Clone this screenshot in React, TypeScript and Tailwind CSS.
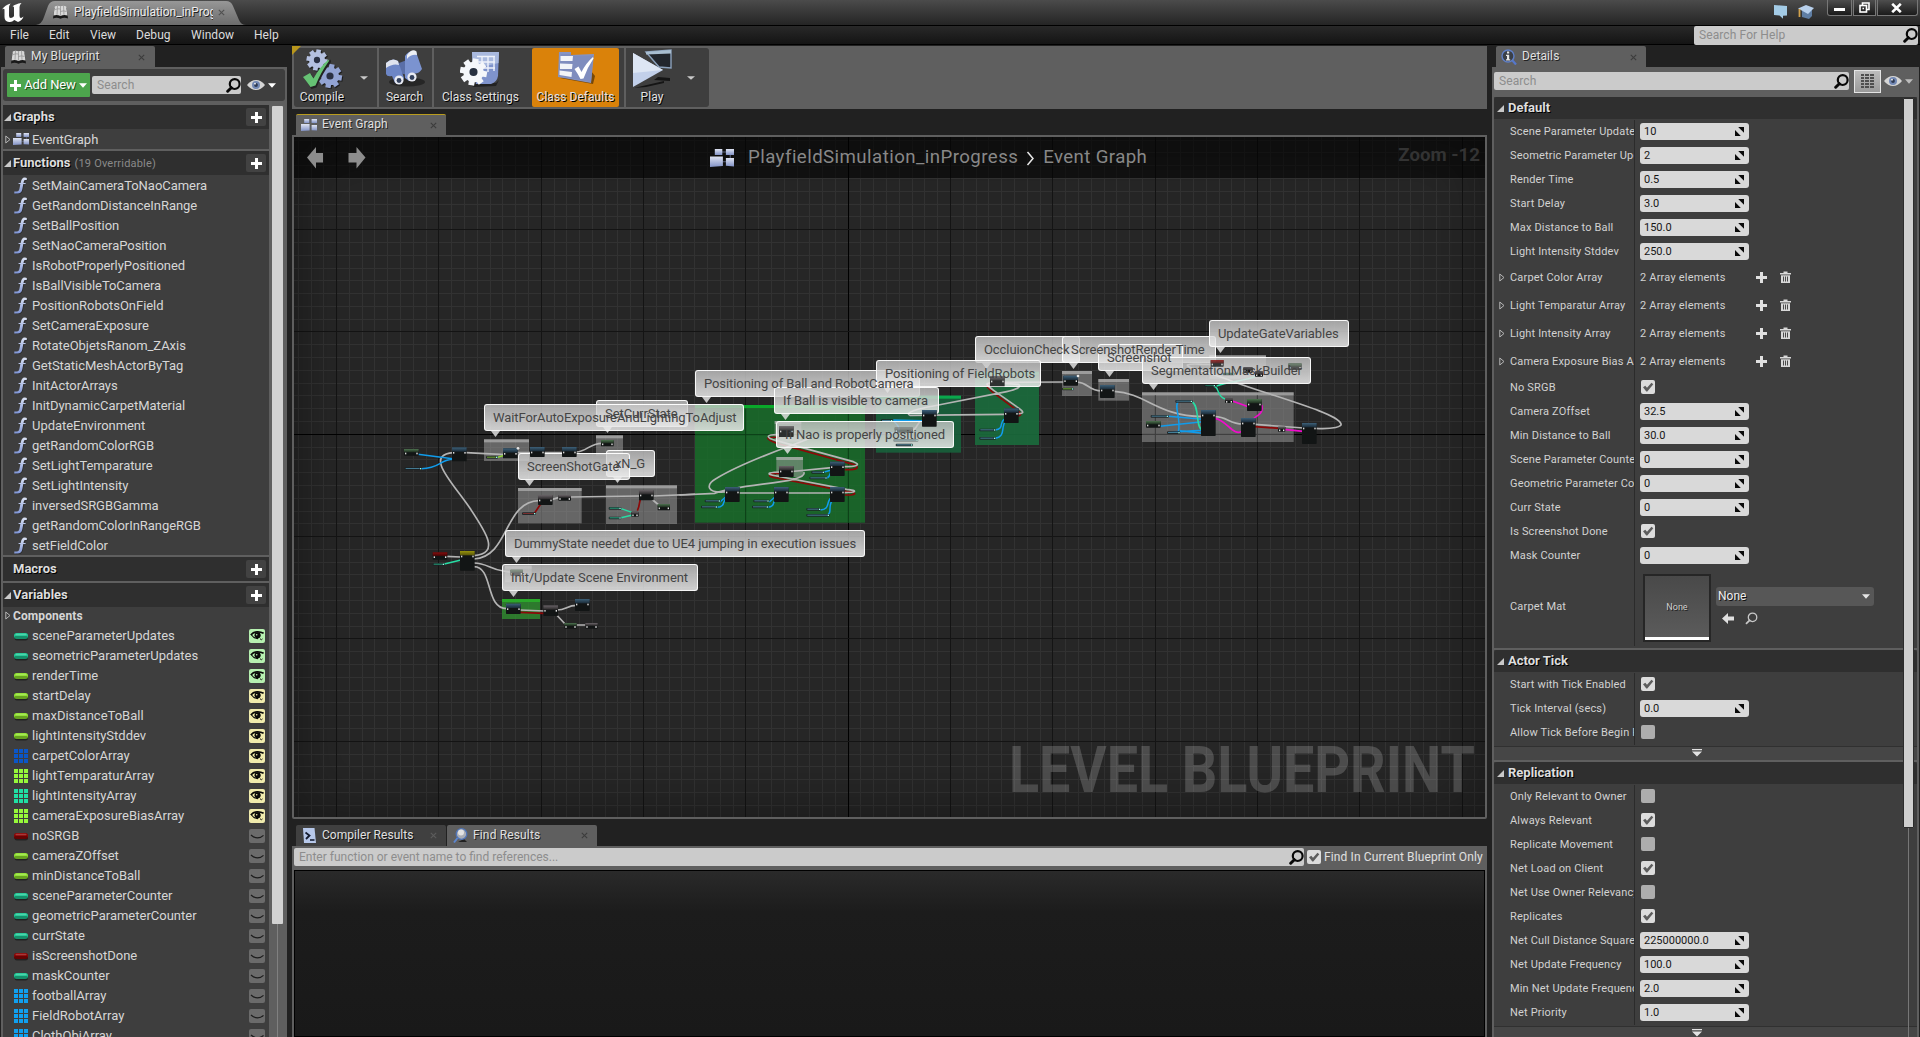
import React from "react";

/* ---------- small icons ---------- */

function GraphIcon({ w = 16, h = 12 }: { w?: number; h?: number }) {
  return (
    <svg width={w} height={h} viewBox="0 0 16 12" className="shrink-0">
      <defs>
        <linearGradient id="gi" x1="0" y1="0" x2="0" y2="1">
          <stop offset="0" stopColor="#dfe4f2" />
          <stop offset="1" stopColor="#8292c6" />
        </linearGradient>
      </defs>
      <path d="M8 2h3M8.5 8.5h3M13.5 4v2" stroke="#59627c" strokeWidth=".7" />
      <rect x="3.2" y="0" width="5" height="4" fill="url(#gi)" />
      <rect x="10.6" y="0" width="5.4" height="4" fill="url(#gi)" />
      <path d="M0 5h8.6v6.4L0 12z" fill="url(#gi)" />
      <path d="M10.6 6H16v5.6l-5.4-.4z" fill="url(#gi)" />
    </svg>
  );
}

function FnIcon() {
  return (
    <svg width="14" height="17" viewBox="0 0 14 17" className="shrink-0">
      <defs>
        <linearGradient id="fn" x1="0" y1="0" x2="0" y2="1">
          <stop offset="0" stopColor="#dde3f3" />
          <stop offset="1" stopColor="#7f95d6" />
        </linearGradient>
      </defs>
      <g fill="none" stroke="#1d1d1d" strokeWidth="1.6" opacity=".6" transform="translate(.8 .8)">
        <path d="M12.6 2C10 .6 9.2 3 8.6 6L7.5 11.5C6.9 14.8 5 16 1 15.2" />
      </g>
      <path d="M12.8 .9v2.100h-1.600C10.400 2.700 9.900 3.800 9.500 6h2.200l-.2 1.100H9.300l-1 5.200C7.700 15.200 6.200 16.500 3.600 16.500H.3v-2h2C4.300 14.700 5 13.800 5.500 11.500L6.400 7.100H4.500l.2-1.100h2C7.300 2.500 8.400.5 11 .6z" fill="url(#fn)" />
    </svg>
  );
}

function Magnifier({ s = 15, c = "#080808", sw = 2.2 }: { s?: number; c?: string; sw?: number }) {
  return (
    <svg width={s} height={s} viewBox="0 0 15 15" className="shrink-0" fill="none" stroke={c}>
      <circle cx="8.700" cy="6.100" r="4.900" strokeWidth={sw} />
      <path d="M5.300 9.700L1.700 13.200" strokeWidth={sw * 1.35} strokeLinecap="round" />
    </svg>
  );
}

function SoftEye() {
  return (
    <svg width="18" height="12" viewBox="0 0 18 12" className="shrink-0">
      <path d="M0 6Q4 1 9 1t9 5q-4 5-9 5T0 6z" fill="#d5d5d5" />
      <circle cx="9" cy="6" r="4" fill="#7288b4" />
      <circle cx="9" cy="6" r="1.900" fill="#2f3a52" />
      <circle cx="8" cy="4.700" r=".9" fill="#f4f4f4" />
    </svg>
  );
}

function Down({ w = 8, h = 5, c = "#e6e6e6" }: { w?: number; h?: number; c?: string }) {
  return (
    <svg width={w} height={h} viewBox="0 0 8 5" className="shrink-0" preserveAspectRatio="none">
      <path d="M0 .3h8L4 4.800z" fill={c} />
    </svg>
  );
}

function Plus({ s = 11, c = "#fff" }: { s?: number; c?: string }) {
  return (
    <svg width={s} height={s} viewBox="0 0 11 11" className="shrink-0">
      <path d="M4 0h3v4h4v3H7v4H4V7H0V4h4z" fill={c} />
    </svg>
  );
}

function Expanded() {
  return (
    <svg width="7" height="7" viewBox="0 0 7 7" className="shrink-0">
      <path d="M7 0v7H0z" fill="#c9c9c9" />
    </svg>
  );
}

function Collapsed() {
  return (
    <svg width="6" height="9" viewBox="0 0 6 9" className="shrink-0">
      <path d="M.8 1v7L5 4.500z" fill="none" stroke="#b5b5b5" strokeWidth="1" />
    </svg>
  );
}

function CloseX({ c = "#3c3c3c" }: { c?: string }) {
  return (
    <svg width="7" height="7" viewBox="0 0 7 7" className="shrink-0">
      <path d="M.8.8l5.400 5.400M6.200.8L.8 6.200" stroke={c} strokeWidth="1.100" />
    </svg>
  );
}

function BookIcon() {
  return (
    <svg width="15" height="14" viewBox="0 0 15 14" className="shrink-0">
      <path d="M1.500 2Q4 .5 7.500 1.800 11 .5 13.500 2L15 12.500Q11 11 7.500 12.800 4 11 0 12.500z" fill="#191919" transform="translate(0 1)" />
      <path d="M1.800 1.500Q4 0 7.500 1.200 11 0 13.200 1.500L14.500 10.500Q11 9.500 7.500 10.900 4 9.500.5 10.500z" fill="#d8d8d8" />
      <path d="M7.500 1.200v9.500M4.500.8L4 9.800M10.500.8l.5 9M2 4.500q5-1.300 5.500 0M7.500 6.500q3-1.300 6 0" stroke="#8e8e8e" strokeWidth=".7" fill="none" />
    </svg>
  );
}

function Check({ on = true }: { on?: boolean }) {
  return on ? (
    <span className="flex h-3.5 w-3.5 shrink-0 items-center justify-center rounded-[2px] bg-[#dcdcdc]">
      <svg width="12" height="10" viewBox="0 0 12 10">
        <path d="M1 5.200l2.300-1.500 1.700 2L9.500.7l1.800 1.600L5.300 9.500H4.300z" fill="#5d5d5d" />
      </svg>
    </span>
  ) : (
    <span className="h-3.5 w-3.5 shrink-0 rounded-[2px] bg-[#adadad]" />
  );
}

/* ---------- left panel ---------- */

const functions = [
  "SetMainCameraToNaoCamera", "GetRandomDistanceInRange", "SetBallPosition", "SetNaoCameraPosition",
  "IsRobotProperlyPositioned", "IsBallVisibleToCamera", "PositionRobotsOnField", "SetCameraExposure",
  "RotateObjetsRanom_ZAxis", "GetStaticMeshActorByTag", "InitActorArrays", "InitDynamicCarpetMaterial",
  "UpdateEnvironment", "getRandomColorRGB", "SetLightTemparature", "SetLightIntensity",
  "inversedSRGBGamma", "getRandomColorInRangeRGB", "setFieldColor",
];

type Eye = "green" | "yellow" | "shut";
const variables: [string, "pill" | "grid", string, Eye][] = [
  ["sceneParameterUpdates", "pill", "#1fc795", "green"],
  ["seometricParameterUpdates", "pill", "#1fc795", "green"],
  ["renderTime", "pill", "#8ee02e", "green"],
  ["startDelay", "pill", "#8ee02e", "yellow"],
  ["maxDistanceToBall", "pill", "#8ee02e", "yellow"],
  ["lightIntensityStddev", "pill", "#8ee02e", "yellow"],
  ["carpetColorArray", "grid", "#0a56c8", "yellow"],
  ["lightTemparaturArray", "grid", "#97f83a", "yellow"],
  ["lightIntensityArray", "grid", "#20e0a4", "yellow"],
  ["cameraExposureBiasArray", "grid", "#97f83a", "yellow"],
  ["noSRGB", "pill", "#8c0505", "shut"],
  ["cameraZOffset", "pill", "#8ee02e", "shut"],
  ["minDistanceToBall", "pill", "#8ee02e", "shut"],
  ["sceneParameterCounter", "pill", "#1fc795", "shut"],
  ["geometricParameterCounter", "pill", "#1fc795", "shut"],
  ["currState", "pill", "#1fc795", "shut"],
  ["isScreenshotDone", "pill", "#8c0505", "shut"],
  ["maskCounter", "pill", "#1fc795", "shut"],
  ["footballArray", "grid", "#10a0f0", "shut"],
  ["FieldRobotArray", "grid", "#10a0f0", "shut"],
  ["ClothObjArray", "grid", "#10a0f0", "shut"],
];

function VarIcon({ kind, color }: { kind: "pill" | "grid"; color: string }) {
  if (kind === "grid")
    return (
      <svg width="14" height="14" viewBox="0 0 14 14" className="shrink-0" fill={color} shapeRendering="crispEdges">
        {[0, 5, 10].map((y) => [0, 5, 10].map((x) => <rect key={`${x}${y}`} x={x} y={y} width="4" height="4" />))}
      </svg>
    );
  return (
    <svg width="14" height="9" viewBox="0 0 14 9" className="shrink-0">
      <rect x=".5" y="2" width="13.500" height="6.500" rx="2.500" fill="#1c1c1c" opacity=".8" />
      <rect x="0" y="1" width="14" height="6" rx="2.500" fill={color} />
      <rect x="0" y="4" width="14" height="3" rx="1.500" fill="#000" opacity=".28" />
      <rect x="1.500" y="1.800" width="11" height="1.400" rx=".7" fill="#fff" opacity=".22" />
    </svg>
  );
}

function EyeBox({ eye }: { eye: Eye }) {
  if (eye === "shut")
    return (
      <span className="h-3.5 w-4 rounded-[2px] bg-[#6b6b6b]">
        <svg width="16" height="14" viewBox="0 0 16 14">
          <path d="M2 6Q5 8.800 8.500 8.800 12 8.800 14.500 6.300" stroke="#1c1c1c" strokeWidth="1.200" fill="none" />
        </svg>
      </span>
    );
  const bg = eye === "green" ? "#b6f0b0" : "#f0ebad";
  return (
    <span className={`h-3.5 w-4 rounded-[2px] ${eye === "green" ? "bg-[#b6f0b0]" : "bg-[#f0ebad]"}`}>
      <svg width="16" height="14" viewBox="0 0 16 14">
        <path d="M1.800 6Q4.500 3 8 2.800T14.600 4.300" stroke="#090909" strokeWidth="1.700" fill="none" />
        <path d="M2.500 6Q5 9.600 9 9.600" stroke="#090909" strokeWidth="1.100" fill="none" />
        <circle cx="8.600" cy="6.300" r="3.100" fill="#090909" />
        <path d="M11 9.800l1.500.9 1-.8" stroke="#111" strokeWidth="1" fill="none" />
        <circle cx="7.700" cy="5.700" r=".8" fill={bg} />
      </svg>
    </span>
  );
}

function SectionHead({ title, extra, arrow = true }: { title: string; extra?: string; arrow?: boolean }) {
  return (
    <div className="flex h-6 shrink-0 items-center bg-[#2f2f2f] pr-[3px]">
      <span className="ml-px w-[9px]">{arrow && <Expanded />}</span>
      <span className="text-[13px] font-bold text-[#dedede] [text-shadow:1px_1px_0_#000]">{title}</span>
      {extra && <span className="ml-1 pt-0.5 text-[11px] tracking-[0.2px] text-[#8a8a8a]">{extra}</span>}
      <span className="ml-auto flex h-[18px] w-5 items-center justify-center rounded-[2px] bg-[#424242]">
        <Plus />
      </span>
    </div>
  );
}

function LeftPanel() {
  return (
    <div className="flex w-[286px] shrink-0 flex-col">
      <div className="ml-1 flex h-[21px] w-[150px] shrink-0 items-center rounded-t-[2px] bg-[#5f5f5f] pl-1.5 pr-2.5">
        <BookIcon />
        <span className="ml-[5px] pb-0.5 text-[12px] tracking-[0.15px] text-[#e0e0e0] [text-shadow:1px_1px_0_#222]">My Blueprint</span>
        <span className="ml-auto pt-0.5"><CloseX /></span>
      </div>
      <div className="flex min-h-0 grow flex-col bg-[#5f5f5f] px-0.5 pt-0.5">
        <div className="flex h-8 shrink-0 items-center rounded-[3px] bg-[#3e3e3e] pl-1">
          <div className="flex h-6 w-[83px] items-center justify-center gap-[3px] rounded-[1px] bg-[#4da64d]">
            <Plus />
            <span className="text-[13px] tracking-[-0.1px] text-white [text-shadow:1px_1px_0_#1d4d1d]">Add New</span>
            <Down c="#fff" />
          </div>
          <div className="ml-0.5 flex h-[18px] w-[149px] items-center justify-between rounded-[2px] bg-[#cbcbcb] pl-[5px]">
            <span className="text-[12px] tracking-[0.1px] text-[#8d8d8d]">Search</span>
            <Magnifier />
          </div>
          <span className="ml-1.5"><SoftEye /></span>
          <span className="ml-[3px]"><Down c="#fff" /></span>
        </div>
        <div className="mt-1 flex min-h-0 grow overflow-hidden">
          <div className="flex w-[266px] shrink-0 flex-col gap-0.5">
            <div>
              <SectionHead title="Graphs" />
              <div className="flex h-5 items-center bg-[#3e3e3e] pl-0.5">
                <Collapsed />
                <span className="ml-0.5"><GraphIcon /></span>
                <span className="ml-[3px] pt-0.5 text-[13px] text-[#d6d6d6]">EventGraph</span>
              </div>
            </div>
            <div>
              <SectionHead title="Functions" extra="(19 Overridable)" />
              <div className="bg-[#3e3e3e]">
                {functions.map((f) => (
                  <div key={f} className="flex h-5 items-center pl-[11px]">
                    <FnIcon />
                    <span className="ml-1 pt-px text-[13px] tracking-[-0.04px] text-[#d6d6d6]">{f}</span>
                  </div>
                ))}
              </div>
            </div>
            <SectionHead title="Macros" arrow={false} />
            <div className="min-h-0">
              <SectionHead title="Variables" />
              <div className="bg-[#3e3e3e]">
                <div className="flex h-[19px] items-center pb-0.5 pl-0.5">
                  <Collapsed />
                  <span className="ml-0.5 text-[12px] font-bold tracking-[0.1px] text-[#d6d6d6]">Components</span>
                </div>
                {variables.map(([name, kind, color, eye]) => (
                  <div key={name} className="flex h-5 items-center pl-[11px] pr-1">
                    <VarIcon kind={kind} color={color} />
                    <span className="ml-1 text-[13px] text-[#d6d6d6]">{name}</span>
                    <span className="ml-auto flex"><EyeBox eye={eye} /></span>
                  </div>
                ))}
              </div>
            </div>
          </div>
          <div className="ml-[3px] flex w-[11px] flex-col items-center pt-px">
            <div className="h-[818px] w-full shrink-0 rounded-[1px] bg-[#d2d2d2]" />
            <div className="w-px grow bg-[#808080]" />
          </div>
        </div>
      </div>
    </div>
  );
}

/* ---------- graph canvas ---------- */

type NodeKind = "fn" | "dark" | "pure" | "ev" | "seq";
const headColor: Record<NodeKind, string> = {
  fn: "url(#hFn)", dark: "url(#hDark)", pure: "url(#hPure)", ev: "url(#hEv)", seq: "url(#hSeq)",
};

function N({ x, y, w = 44, h = 42, k = "fn" }: { x: number; y: number; w?: number; h?: number; k?: NodeKind }) {
  const head = Math.min(13, h * 0.5);
  return (
    <g>
      <rect x={x} y={y} width={w} height={h} rx="2" fill="#121515" />
      <rect x={x} y={y} width={w} height={head} fill={headColor[k]} />
      <rect x={x + 3} y={y + head + 1} width="4" height="5" fill="#d8d8d8" />
      <rect x={x + w - 7} y={y + head + 1} width="4" height="5" fill="#e6e6e6" />
    </g>
  );
}

function Pill({ x, y, w, c = "#55a0c0" }: { x: number; y: number; w: number; c?: string }) {
  return (
    <g>
      <rect x={x} y={y} width={w} height="8" rx="3" fill="#1b2124" opacity=".9" />
      <rect x={x + 3} y={y + 2} width={w - 10} height="3" fill={c} opacity=".7" />
      <rect x={x + w - 6} y={y + 2} width="4" height="4" fill="#9fe" />
    </g>
  );
}

function Box({ x, y, w, h, c, t }: { x: number; y: number; w: number; h: number; c: string; t: string }) {
  return (
    <g>
      <rect x={x} y={y} width={w} height={h} fill={c} />
      <rect x={x} y={y} width={w} height="9" fill={t} />
    </g>
  );
}

const gray = "rgba(165,165,165,0.5)";
const grayTop = "rgba(190,190,190,0.6)";

function Grid() {
  const lines: React.ReactElement[] = [];
  const step = 12.79;
  const vx = (k: number) => Math.round(848.2 + k * step - 0.5);
  const hy = (k: number) => Math.round(434.3 + k * step - 0.5);
  const pass = (major: boolean) => {
    for (let k = -44; k <= 50; k++) {
      const x = vx(k);
      if (x < 294 || x > 1485 || (k % 8 === 0) !== major) continue;
      lines.push(<rect key={`v${k}`} x={x} y={137} width={1} height={682} fill={k === 0 ? "#000" : major ? "#141414" : "#323232"} />);
    }
    for (let k = -24; k <= 31; k++) {
      const y = hy(k);
      if (y < 137 || y > 818 || (k % 8 === 0) !== major) continue;
      lines.push(<rect key={`h${k}`} x={294} y={y} width={1191} height={1} fill={k === 0 ? "#000" : major ? "#141414" : "#323232"} />);
    }
  };
  pass(false);
  pass(true);
  return <g shapeRendering="crispEdges">{lines}</g>;
}

function GraphDrawing() {
  const wire = { fill: "none", stroke: "#b4b4b4", strokeWidth: 5, strokeLinecap: "round" as const };
  const blue = { fill: "none", stroke: "#109cec", strokeWidth: 4.5 };
  const red = { fill: "none", stroke: "#8d0808", strokeWidth: 5 };
  const teal = { fill: "none", stroke: "#28dca4", strokeWidth: 4.5 };
  const pink = { fill: "none", stroke: "#f00ccb", strokeWidth: 5 };
  return (
    <svg width="1191" height="681" viewBox="294 137 1191 681" className="absolute inset-0">
      <defs>
        {([["hFn", "#3d6079", "#1a2a36"], ["hDark", "#6a6468", "#2a2829"], ["hPure", "#4e7350", "#1c2b1d"], ["hEv", "#8c0c0c", "#3c0808"], ["hSeq", "#97930c", "#57540a"]] as const).map(([id, a, b]) => (
          <linearGradient key={id} id={id} x1="0" y1="0" x2="0" y2="1">
            <stop offset="0" stopColor={a} />
            <stop offset="1" stopColor={b} />
          </linearGradient>
        ))}
      </defs>
      <Grid />

      {/* entry points, gates and environment update */}
      <g transform="translate(390 380) scale(.33333)">
        <Box x={282} y={178} w={135} h={65} c={gray} t={grayTop} />
        <Box x={618} y={166} w={81} h={60} c={gray} t={grayTop} />
        <Box x={384} y={324} w={191} h={106} c={gray} t={grayTop} />
        <Box x={648} y={316} w={213} h={116} c={gray} t={grayTop} />
        <Box x={345} y={557} w={80} h={50} c={gray} t={grayTop} />
        <Box x={336} y={657} w={114} h={60} c="rgba(48,150,48,0.75)" t="#2aa82a" />
        <path {...wire} d="M252 527C330 520 290 460 240 385S100 225 190 218" />
        <path {...wire} d="M228 218L345 224M380 218H425M460 218H520M560 216C590 214 600 190 636 190" />
        <path {...wire} d="M252 537C360 530 340 364 448 362M487 358L508 352M543 351L748 348M790 348L960 341M785 357L806 375" />
        <path {...wire} d="M252 549C290 549 300 568 340 573L364 577M252 560C310 560 285 686 350 686M390 690L463 693M500 690C530 690 530 676 560 676M500 705L528 735M557 735H590M168 529L212 531" />
        <path {...blue} d="M84 223L188 236M95 266C150 266 150 238 190 238" />
        <path {...red} d="M390 697L463 700M432 402L452 372M742 392C752 370 746 358 756 352" />
        <path {...teal} d="M160 553L216 539M693 386L728 398M693 413L728 405" />
        <path d="M320 233L342 226" stroke="#8ee02e" strokeWidth="4" />
        <N x={42} y={207} h={20} k="pure" />
        <Pill x={44} y={262} w={52} />
        <N x={186} y={202} />
        <Pill x={288} y={228} w={36} c="#8ee02e" />
        <N x={339} y={205} h={30} />
        <circle cx="384" cy="205" r="4" fill="#e8e8e8" />
        <N x={633} y={180} w={38} h={19} k="pure" />
        <N x={444} y={345} h={30} k="dark" />
        <Pill x={396} y={397} w={42} c="#a03030" />
        <N x={505} y={345} w={38} h={17} k="dark" />
        <N x={747} y={330} h={31} k="dark" />
        <Pill x={656} y={381} w={38} c="#28dca4" />
        <Pill x={656} y={410} w={38} c="#28dca4" />
        <N x={724} y={395} w={22} h={15} k="dark" />
        <N x={803} y={372} w={37} h={19} k="pure" />
        <N x={128} y={517} h={22} k="ev" />
        <Pill x={128} y={549} w={36} c="#28dca4" />
        <N x={210} y={513} h={59} k="seq" />
        <N x={348} y={671} h={31} />
        <N x={460} y={676} h={32} k="dark" />
        <N x={555} y={657} h={36} />
        <N x={523} y={729} w={37} h={17} k="pure" />
        <N x={586} y={729} w={37} h={17} k="dark" />
      </g>

      {/* ball, camera and field robot placement */}
      <g transform="translate(680 350) scale(.33333)">
        <Box x={45} y={165} w={510} h={353} c="rgba(26,106,42,0.9)" t="#0aa82a" />
        <Box x={588} y={137} w={255} h={171} c="rgba(24,98,60,0.9)" t="#0aa84c" />
        <Box x={885} y={65} w={192} h={220} c="rgba(26,106,60,0.92)" t="#14a050" />
        <Box x={284} y={213} w={80} h={62} c={gray} t={grayTop} />
        <Box x={289} y={321} w={80} h={60} c={gray} t={grayTop} />
        <path d="M197 176V518M505 176V518M45 254H555" stroke="#0b3c16" strokeWidth="3" />
        <path {...red} d="M300 262C250 260 255 265 290 280L520 343C540 352 535 360 495 359M310 372C265 366 255 380 290 384L500 424C535 428 530 436 495 435M950 98C905 100 920 112 940 128L1010 180C1035 196 1015 200 1000 198" />
        <path {...wire} d="M300 254C250 252 260 265 290 272L520 335C545 345 530 350 490 350M455 353L320 366C265 365 250 372 290 378L500 418C535 422 530 428 490 428M455 429H180M135 426C80 430 75 405 110 385C200 330 330 290 390 265M0 435L105 430M105 430C180 400 380 400 372 368M940 98C910 98 920 106 942 122L1010 170C1040 190 1030 192 1000 191M975 193L690 196C670 188 720 175 760 168L980 125C1015 118 1025 108 1015 103L974 100M724 212C712 216 715 230 700 240" />
        <path {...blue} d="M120 456L140 438M110 472C140 470 125 450 140 446M268 456L288 438M262 472C290 470 275 450 290 446M420 480C455 478 435 450 458 440M440 496C460 490 440 465 460 448M430 367L455 360M440 384C455 380 445 365 458 362M640 210L728 212M620 250C690 250 640 215 640 212M945 240C975 238 955 215 976 206M945 265C980 260 960 230 978 212" />
        <N x={297} y={348} h={33} k="dark" />
        <N x={450} y={335} h={43} />
        <N x={135} y={411} h={45} />
        <N x={282} y={411} h={45} />
        <N x={450} y={411} h={45} />
        <Pill x={74} y={449} w={48} /><Pill x={63} y={467} w={50} />
        <Pill x={220} y={449} w={48} /><Pill x={216} y={467} w={50} />
        <Pill x={379} y={474} w={44} /><Pill x={379} y={492} w={70} />
        <Pill x={394} y={363} w={40} /><Pill x={388} y={380} w={54} />
        <Pill x={603} y={208} w={36} /><Pill x={594} y={246} w={36} />
        <N x={972} y={175} h={44} />
        <Pill x={898} y={236} w={50} /><Pill x={898} y={261} w={50} />
      </g>

      {/* screenshot and segmentation masks */}
      <g transform="translate(960 310) scale(.33333)">
        <Box x={306} y={183} w={90} h={75} c={gray} t={grayTop} />
        <Box x={415} y={207} w={92} h={65} c={gray} t={grayTop} />
        <Box x={546} y={247} w={455} h={149} c="rgba(150,150,150,0.55)" t={grayTop} />
        <Box x={748} y={136} w={170} h={70} c={gray} t={grayTop} />
        <path d="M586 256V396M892 256V396M546 373H1000" stroke="#3c3c3c" strokeWidth="3" />
        <path {...wire} d="M134 217L315 216M352 216C385 218 385 242 425 243M463 244C560 250 590 318 728 320M766 320C800 320 810 342 848 342M885 343L1030 354M1065 355C1120 358 1150 350 1142 340C1130 310 960 265 820 215C760 190 680 175 682 165C700 158 720 165 750 163" />
        <path {...blue} d="M625 319L728 328M600 349L728 335M625 368C680 365 700 360 730 362M655 366C665 330 640 285 655 276M660 362L728 370" />
        <path {...teal} d="M697 276C720 290 705 355 728 360M740 228C790 222 760 255 797 268M770 228C800 215 860 212 885 200M790 192H820" />
        <path {...pink} d="M765 325C800 330 820 380 846 364M815 272L865 290M905 285C915 320 870 320 878 335M972 358L1030 364" />
        <path {...red} d="M885 350L960 355" />
        <N x={310} y={197} h={30} />
        <circle cx="354" cy="198" r="4" fill="#e8e8e8" />
        <Pill x={306} y={233} w={36} c="#8ee02e" />
        <N x={420} y={225} h={39} />
        <Pill x={572} y={315} w={54} />
        <N x={558} y={333} h={20} k="pure" />
        <Pill x={621} y={364} w={40} />
        <Pill x={646} y={270} w={52} />
        <N x={723} y={300} h={78} />
        <N x={843} y={324} h={57} />
        <N x={861} y={267} h={36} k="pure" />
        <N x={795} y={265} w={24} h={14} k="dark" />
        <N x={954} y={350} w={22} h={15} k="dark" />
        <N x={1026} y={339} h={63} />
        <Pill x={733} y={223} w={34} c="#208060" />
      </g>
    </svg>
  );
}

/* Nodes that stay in front of the comment bubbles. */
function FrontNodes() {
  return (
    <svg width="1191" height="681" viewBox="294 137 1191 681" className="absolute inset-0">
      <g transform="translate(390 380) scale(.33333)">
        <N x={420} y={201} h={30} />
        <N x={516} y={201} h={30} />
        <g opacity=".45"><N x={361} y={569} w={38} h={18} k="pure" /></g>
      </g>
      <g transform="translate(680 350) scale(.33333)">
        <g opacity=".85"><N x={297} y={228} h={33} k="dark" /></g>
        <N x={726} y={180} h={50} />
        <g opacity=".4">
          <N x={644} y={232} w={55} h={16} k="dark" />
          <Pill x={640} y={267} w={75} />
        </g>
        <Pill x={647} y={281} w={52} />
        <g opacity=".85"><N x={930} y={78} h={31} k="dark" /></g>
      </g>
      <g transform="translate(960 310) scale(.33333)">
        <g opacity=".8"><N x={752} y={150} w={39} h={20} k="ev" /></g>
        <N x={850} y={172} w={28} h={16} k="dark" />
        <N x={885} y={184} w={24} h={16} k="dark" />
        <g opacity=".6">
          <N x={985} y={160} w={40} h={20} k="pure" />
          <Pill x={788} y={188} w={36} c="#208060" />
        </g>
      </g>
    </svg>
  );
}

const bubbles: [string, number, number, number][] = [
  ["SetCurrState", 596, 400, 92],
  ["WaitForAutoExposureAndLightingToAdjust", 484, 404, 260],
  ["xN_G", 606, 450, 49],
  ["ScreenShotGate", 518, 453, 112],
  ["DummyState needet due to UE4 jumping in execution issues", 505, 530, 360],
  ["Init/Update Scene Environment", 502, 564, 196],
  ["Positioning of Ball and RobotCamera", 695, 370, 225],
  ["If Ball is visible to camera", 774, 387, 165],
  ["If Nao is properly positioned", 776, 421, 178],
  ["OccluionCheck", 975, 336, 105],
  ["Positioning of FieldRobots", 876, 360, 165],
  ["ScreenshotRenderTime", 1062, 336, 154],
  ["Screenshot", 1098, 344, 85],
  ["SegmentationMaskBuilder", 1142, 357, 169],
  ["UpdateGateVariables", 1209, 320, 140],
];

function BubbleShape({ x, y, w }: { x: number; y: number; w: number }) {
  return (
    <div className="absolute" style={{ left: x - 294, top: y - 137, width: w }}>
      <div className="h-[27px] rounded-[3px] border border-white/90 bg-linear-to-b from-[#c4c4c4]/80 to-[#ececec]/85" />
      <svg width="9" height="6" viewBox="0 0 9 6" className="absolute left-[7px] top-[27px]">
        <path d="M0 0h9L4.500 6z" fill="#e0e0e0" opacity=".85" />
      </svg>
    </div>
  );
}

function BubbleText({ text, x, y }: { text: string; x: number; y: number }) {
  return (
    <div
      className="absolute flex h-[27px] items-center whitespace-nowrap pl-[9px] text-[13px] tracking-[-0.08px] text-[#444]"
      style={{ left: x - 294, top: y - 137 }}
    >
      {text}
    </div>
  );
}

function Canvas() {
  return (
    <div className="relative h-[684px] shrink-0 overflow-hidden rounded-b-[2px] border-2 border-[#5f5f5f] bg-[#262626]">
      <GraphDrawing />
      {bubbles.map(([t, x, y, w]) => <BubbleShape key={t} x={x} y={y} w={w} />)}
      <FrontNodes />
      {bubbles.map(([t, x, y]) => <BubbleText key={t} text={t} x={x} y={y} />)}
      <div className="pointer-events-none absolute inset-0 shadow-[inset_0_0_60px_rgba(0,0,0,0.42)]" />
      <div className="absolute inset-x-0 top-0 flex h-[41px] items-center bg-black/55">
        <svg width="60" height="23" viewBox="0 0 60 23" className="ml-[13px]" fill="#8d8d8d">
          <path d="M0 11.500L9 1v6h7v9.500H9v6z" />
          <path d="M58.500 11.500L49.500 1v6h-8v9.500h8v6z" />
        </svg>
        <span className="ml-[343px]"><GraphIcon w={24} h={18} /></span>
        <span className="ml-3.5 pb-px text-[18.67px] tracking-[0.43px] text-[#888]">PlayfieldSimulation_inProgress</span>
        <svg width="9" height="15" viewBox="0 0 9 15" className="ml-[8px] mt-0.5">
          <path d="M1.500 1L7 7.500 1.500 14" fill="none" stroke="#e8e8e8" strokeWidth="1.500" />
        </svg>
        <span className="ml-[8px] pb-px text-[18.67px] tracking-[0.38px] text-[#888]">Event Graph</span>
        <span className="ml-auto mr-[5px] pb-[5px] text-[18.67px] font-bold text-[#333]">Zoom -12</span>
      </div>
      <div className="absolute bottom-[9px] right-[10px] origin-right scale-x-[0.855] text-[65px] font-bold leading-[76px] text-white/18">
        LEVEL BLUEPRINT
      </div>
    </div>
  );
}

/* ---------- toolbar ---------- */

function Gear({ cx, cy, r, fill, hole }: { cx: number; cy: number; r: number; fill: string; hole: string }) {
  return (
    <g transform={`translate(${cx} ${cy})`}>
      {[0, 45, 90, 135].map((a) => (
        <rect key={a} x={-r * 0.22} y={-r} width={r * 0.44} height={r * 2} fill={fill} transform={`rotate(${a + 10})`} />
      ))}
      <circle r={r * 0.76} fill={fill} />
      <circle r={r * 0.3} fill={hole} />
    </g>
  );
}

function CompileIcon() {
  return (
    <svg width="42" height="40" viewBox="0 0 42 40">
      <Gear cx={16} cy={12} r={10.5} fill="#1d1d1d" hole="#1d1d1d" />
      <Gear cx={15} cy={11} r={10.5} fill="#b4c0e0" hole="#2b3144" />
      <Gear cx={29} cy={28} r={12} fill="#1d1d1d" hole="#1d1d1d" />
      <Gear cx={28} cy={27} r={12} fill="#93a4d4" hole="#2b3144" />
      <path d="M1 28l7-4 3.500 5.500Q17 19 27.500 9.500L28 12Q19 24 13.500 37.500L8.500 39Q5 33 1 28z" fill="#222" transform="translate(1 1)" />
      <path d="M1 28l7-4 3.500 5.500Q17 19 26.500 10.500L27 12Q19 23 13.500 36.500L8.500 38Q5 33 1 28z" fill="#66c274" />
    </svg>
  );
}

function BinocularsIcon() {
  return (
    <svg width="40" height="38" viewBox="0 0 40 38">
      <ellipse cx="22" cy="32" rx="18" ry="4.500" fill="#1f1f1f" opacity=".75" />
      <path d="M14 13l8-3 6 6-6 9-7-2z" fill="#5a6fa8" />
      <path d="M1 13Q7 7 13 11L19 28Q16 34 10 33L7 26Q2 27 1 24z" fill="#6d86c6" />
      <path d="M1 13Q7 7 13 11L14 15Q8 13 1 18z" fill="#dfe3ee" />
      <path d="M20 6Q25-1 31 2L37 19Q33 25 27 23L24 31 20 28z" fill="#7b93d0" />
      <path d="M22 5Q27-2 31.500 1.500L32 5Q26 4 22 9z" fill="#eef0f5" />
      <circle cx="14" cy="30" r="4.600" fill="#e8ebf3" /><circle cx="14" cy="30.500" r="2.400" fill="#33415e" />
      <circle cx="27" cy="27" r="4.600" fill="#e8ebf3" /><circle cx="27" cy="27.500" r="2.400" fill="#33415e" />
    </svg>
  );
}

function SettingsIcon() {
  return (
    <svg width="42" height="38" viewBox="0 0 42 38">
      <path d="M8 34l28-1 3-3-3 6-22 1z" fill="#1c1c1c" opacity=".8" />
      <path d="M12 2h27l-1 24q-1 6-7 8H16z" fill="#7f93cb" />
      <path d="M12 2h27l-.5 11-26 6z" fill="#a9b9de" />
      <path d="M17 6.500h18M16 12h19M17 18h18M22 6v16M28 6v16M34 6v15" stroke="#eef2fb" strokeWidth="1.400" />
      <Gear cx={13.5} cy={22} r={13.5} fill="#f5f7fa" hole="#27303f" />
    </svg>
  );
}

function DefaultsIcon() {
  return (
    <svg width="40" height="36" viewBox="0 0 40 36">
      <path d="M4 27l33 6 2-8-4-5z" fill="#5f3a06" opacity=".8" />
      <path d="M3 1h12v3l23-1-3 29L2 26z" fill="#8694c4" />
      <path d="M5 3h10v1.500h22L35 31 3 25z" fill="#7f8dbe" />
      <path d="M4.500 5h12.500l-.5 5H4.500zM4 12.500l12.500.5-.5 5H4zM3.500 19.500l12.500 1.500-.5 5L3.500 24z" fill="#f2f4f8" />
      <path d="M18.500 18l4-2.500 3 5.500Q30 12 37 6l.5 1.500Q31 17 27.500 27.500L24.500 28Q22 23 18.500 18z" fill="#fff" />
    </svg>
  );
}

function PlayIcon() {
  return (
    <svg width="40" height="40" viewBox="0 0 40 40">
      <path d="M2 39l30-7v2L14 38zM26 28l12 1v3l-16-1z" fill="#151515" />
      <path d="M14 3l25-2v18l-12-1z" fill="#22262d" stroke="#8ba1bc" strokeWidth="1.400" />
      <path d="M14 3l25-2v3.500l-25 1z" fill="#a8bdd0" />
      <path d="M1 4l30 17L1 38z" fill="#c2d0ea" />
      <path d="M1 4l30 17-30 3z" fill="#dde6f4" />
    </svg>
  );
}

function ToolButton({ icon, label, width, active }: { icon: React.ReactNode; label: string; width: string; active?: boolean }) {
  return (
    <div className={`flex h-full flex-col items-center justify-between pb-0.5 pt-px ${width} ${active ? "rounded-[2px] bg-[#da820a]" : ""}`}>
      <div className="flex h-10 items-center">{icon}</div>
      <span className="whitespace-nowrap text-[12px] leading-[15px] tracking-[0.05px] text-[#e2e2e2] [text-shadow:1px_1px_0_#000]">{label}</span>
    </div>
  );
}

function Toolbar() {
  return (
    <div className="relative flex h-[63px] shrink-0 items-center bg-[#5f5f5f] pl-0.5">
      <div className="flex h-[59px] w-[83px] rounded-l-[3px] bg-[#3e3e3e]">
        <ToolButton width="w-[56px]" icon={<span className="ml-0.5"><CompileIcon /></span>} label="Compile" />
        <span className="ml-[10px] mt-7"><Down w={8} h={4} c="#c9c9c9" /></span>
      </div>
      <div className="ml-0.5 flex h-[59px] w-[53px] bg-[#3e3e3e]">
        <ToolButton width="w-[51px]" icon={<BinocularsIcon />} label="Search" />
      </div>
      <div className="ml-0.5 flex h-[59px] w-[190px] bg-[#3e3e3e]">
        <ToolButton width="w-[93px]" icon={<SettingsIcon />} label="Class Settings" />
        <span className="ml-[5px] h-full">
          <ToolButton width="w-[87px]" active icon={<DefaultsIcon />} label="Class Defaults" />
        </span>
      </div>
      <div className="ml-0.5 flex h-[59px] w-[83px] rounded-r-[3px] bg-[#3e3e3e]">
        <ToolButton width="w-[52px]" icon={<PlayIcon />} label="Play" />
        <span className="ml-[9px] mt-7"><Down w={8} h={4} c="#c9c9c9" /></span>
      </div>
      <svg width="9" height="9" viewBox="0 0 9 9" className="absolute left-0 top-0"><path d="M0 0h9L0 9z" fill="#b8961c" /></svg>
    </div>
  );
}

/* ---------- results ---------- */

function Results() {
  return (
    <div className="mt-1.5 flex min-h-0 grow flex-col">
      <div className="ml-1 flex h-[21px] shrink-0 gap-px">
        <div className="flex w-[150px] items-center rounded-t-[2px] bg-[#404040] pl-[7px] pr-[9px]">
          <svg width="13" height="15" viewBox="0 0 13 15">
            <path d="M0 0h11.500L13 15H1z" fill="#b7c8ea" />
            <path d="M2.500 4.500l4 3-3.500 3.500" stroke="#141c30" strokeWidth="1.800" fill="none" /><path d="M7 12h4.500" stroke="#141c30" strokeWidth="1.600" />
          </svg>
          <span className="ml-[6px] pb-px text-[12px] tracking-[0.05px] text-[#e0e0e0] [text-shadow:1px_1px_0_#111]">Compiler Results</span>
          <span className="ml-auto"><CloseX c="#5c5c5c" /></span>
        </div>
        <div className="flex w-[150px] items-center rounded-t-[2px] bg-[#5f5f5f] pl-[6px] pr-[9px]">
          <svg width="15" height="16" viewBox="0 0 15 16">
            <path d="M5 14h9l-3-3z" fill="#222" />
            <circle cx="8.500" cy="6" r="5.300" fill="#a9adb5" stroke="#4f74b8" strokeWidth="1.300" />
            <circle cx="8" cy="4.500" r="3" fill="#e2e2e2" />
            <path d="M4.500 10L1 14.500" stroke="#5c86d0" strokeWidth="2" />
          </svg>
          <span className="ml-[5px] pb-px text-[12px] tracking-[0.15px] text-[#e0e0e0] [text-shadow:1px_1px_0_#222]">Find Results</span>
          <span className="ml-auto"><CloseX /></span>
        </div>
      </div>
      <div className="flex min-h-0 grow flex-col bg-[#5f5f5f] px-0.5 pt-0.5">
        <div className="flex h-[18px] shrink-0 items-center">
          <div className="flex h-full w-[1010px] items-center justify-between rounded-[2px] bg-[#cbcbcb] pl-[5px]">
            <span className="text-[12px] text-[#8d8d8d]">Enter function or event name to find references...</span>
            <Magnifier />
          </div>
          <span className="ml-[3px] flex"><Check /></span>
          <span className="ml-[3px] whitespace-nowrap text-[12px] tracking-[0.12px] text-[#e0e0e0]">Find In Current Blueprint Only</span>
        </div>
        <div className="mt-1 grow border border-black bg-linear-to-b from-[#2a2a2a] via-[#1c1c1c] via-25% to-[#191919]" />
      </div>
    </div>
  );
}

/* ---------- details ---------- */

function Label({ children }: { children: React.ReactNode }) {
  return (
    <div className="flex h-full w-[141px] shrink-0 items-center overflow-hidden whitespace-nowrap border-r border-[#2b2b2b] pl-4 pt-px text-[11px] tracking-[0.17px] text-[#d2d2d2]">
      {children}
    </div>
  );
}

function Spin({ v }: { v: string }) {
  return (
    <div className="ml-[5px] flex h-[17px] w-[109px] items-center justify-between rounded-[3px] bg-[#d9d9d9] pl-1 pr-[5px] text-[11px] text-[#161616]">
      <span className="pt-px">{v}</span>
      <svg width="9" height="9" viewBox="0 0 9 9"><path d="M3.200 0H9v5.800zM0 3v6h5.800z" fill="#0a0a0a" /></svg>
    </div>
  );
}

type Row = { n: string; v?: string; on?: boolean; arr?: boolean };
function DetailRow({ r }: { r: Row }) {
  return (
    <div className={`flex items-center ${r.arr ? "h-7" : "h-6"}`}>
      <span className="w-0 shrink-0"><span className="ml-[5px] block">{r.arr && <Collapsed />}</span></span>
      <Label>{r.n}</Label>
      {r.arr ? (
        <>
          <span className="ml-[5px] w-[116px] pt-px text-[11px] tracking-[0.2px] text-[#d2d2d2]">2 Array elements</span>
          <span className="flex pb-px"><Plus c="#e0e0e0" /></span>
          <svg width="11" height="12" viewBox="0 0 11 12" className="mb-px ml-[13px]">
            <path d="M0 2h3.500V.5h4V2H11v1.500H0z" fill="#d8d8d8" />
            <path d="M1 4.300h9V12H1z" fill="#d8d8d8" />
            <path d="M3.500 5.500v5M5.500 5.500v5M7.500 5.500v5" stroke="#3a3a3a" strokeWidth=".9" />
          </svg>
        </>
      ) : r.v !== undefined ? (
        <Spin v={r.v} />
      ) : (
        <span className="mb-px ml-1.5 flex"><Check on={r.on} /></span>
      )}
    </div>
  );
}

const defaults: Row[] = [
  { n: "Scene Parameter Updates", v: "10" }, { n: "Seometric Parameter Updates", v: "2" }, { n: "Render Time", v: "0.5" },
  { n: "Start Delay", v: "3.0" }, { n: "Max Distance to Ball", v: "150.0" }, { n: "Light Intensity Stddev", v: "250.0" },
  { n: "Carpet Color Array", arr: true }, { n: "Light Temparatur Array", arr: true },
  { n: "Light Intensity Array", arr: true }, { n: "Camera Exposure Bias Array", arr: true },
  { n: "No SRGB", on: true }, { n: "Camera ZOffset", v: "32.5" }, { n: "Min Distance to Ball", v: "30.0" },
  { n: "Scene Parameter Counter", v: "0" }, { n: "Geometric Parameter Counter", v: "0" }, { n: "Curr State", v: "0" },
  { n: "Is Screenshot Done", on: true }, { n: "Mask Counter", v: "0" },
];
const tick: Row[] = [
  { n: "Start with Tick Enabled", on: true }, { n: "Tick Interval (secs)", v: "0.0" }, { n: "Allow Tick Before Begin Play", on: false },
];
const replication: Row[] = [
  { n: "Only Relevant to Owner", on: false }, { n: "Always Relevant", on: true }, { n: "Replicate Movement", on: false },
  { n: "Net Load on Client", on: true }, { n: "Net Use Owner Relevancy", on: false }, { n: "Replicates", on: true },
  { n: "Net Cull Distance Squared", v: "225000000.0" }, { n: "Net Update Frequency", v: "100.0" },
  { n: "Min Net Update Frequency", v: "2.0" }, { n: "Net Priority", v: "1.0" },
];

function DetailHead({ t }: { t: string }) {
  return (
    <div className="mb-[0.5px] flex h-[22px] shrink-0 items-center rounded-t-[3px] bg-[#2f2f2f] pl-[3px]">
      <Expanded />
      <span className="ml-1 text-[13px] font-bold text-[#dedede] [text-shadow:1px_1px_0_#000]">{t}</span>
    </div>
  );
}

function MoreBar() {
  return (
    <div className="mt-[1.5px] flex h-[14px] items-center justify-center border-t border-[#303030] bg-[#464646] pb-px pr-[17px]">
      <svg width="10" height="8" viewBox="0 0 10 8"><path d="M0 0h10v1.200H0zM0 2.500h10L5 7.500z" fill="#e2e2e2" /></svg>
    </div>
  );
}

function Details() {
  return (
    <div className="ml-[5px] flex w-[427px] shrink-0 flex-col">
      <div className="ml-1 flex h-[21px] w-[150px] shrink-0 items-center rounded-t-[2px] bg-[#5f5f5f] pl-[5px] pr-[9px]">
        <svg width="16" height="16" viewBox="0 0 16 16">
          <path d="M11 11l4 4.500" stroke="#5577cc" strokeWidth="2.200" />
          <circle cx="7" cy="7" r="6" fill="#3a3f48" stroke="#5f7fc6" strokeWidth="1.400" />
          <path d="M6 2.500h2.200v2H6zM5 5.700h3.200v4.500h1V11.500H5v-1.300h1V7H5z" fill="#e6e6e6" />
        </svg>
        <span className="ml-[5px] pb-0.5 text-[12px] tracking-[0.1px] text-[#e0e0e0] [text-shadow:1px_1px_0_#222]">Details</span>
        <span className="ml-auto pt-0.5"><CloseX /></span>
      </div>
      <div className="flex min-h-0 grow flex-col bg-[#5f5f5f] pl-0.5 pr-[2px] pt-0.5">
        <div className="flex h-6 shrink-0 items-center">
          <div className="flex h-[18px] w-[355px] items-center justify-between rounded-[2px] bg-[#cbcbcb] pl-[5px]">
            <span className="text-[12px] tracking-[0.1px] text-[#8d8d8d]">Search</span>
            <Magnifier />
          </div>
          <div className="ml-[5px] flex h-[23px] w-[27px] items-center justify-center border border-[#e4e4e4] bg-linear-to-b from-[#bdbdbd] to-[#9a9a9a]">
            <svg width="13" height="14" viewBox="0 0 13 14" fill="#4f4f4f">
              {[0, 3, 6, 9, 12].map((y) => <g key={y}><rect x="0" y={y} width="3" height="2" /><rect x="4" y={y} width="4" height="2" /><rect x="9" y={y} width="4" height="2" /></g>)}
            </svg>
          </div>
          <span className="ml-[3px]"><SoftEye /></span>
          <span className="ml-[3px]"><Down c="#bcbcbc" /></span>
        </div>
        <div className="relative mt-1 min-h-0 grow overflow-hidden">
          <div className="flex flex-col gap-0.5">
            <div className="h-[551px] bg-[#3e3e3e]">
              <DetailHead t="Default" />
              {defaults.map((r) => <DetailRow key={r.n} r={r} />)}
              <div className="flex h-[78px] items-start">
                <Label>Carpet Mat</Label>
                <div className="ml-2 mt-1.5 flex h-[68px] w-[68px] flex-col border-2 border-[#262626] bg-linear-to-b from-[#494949] to-[#5c5c5c]">
                  <span className="flex grow items-center justify-center pt-1 text-[9px] text-[#cfcfcf] [text-shadow:1px_1px_0_#222]">None</span>
                  <span className="h-[3px] shrink-0 bg-white" />
                </div>
                <div className="ml-[5px] mt-[19px]">
                  <div className="flex h-[19px] w-[158px] items-center justify-between rounded-[3px] bg-[#575757] pl-0.5 pr-1">
                    <span className="pb-px text-[12px] text-[#eee] [text-shadow:1px_1px_0_#111]">None</span>
                    <Down />
                  </div>
                  <div className="mt-[6px] flex items-center pl-[6px]">
                    <svg width="12" height="11" viewBox="0 0 12 11"><path d="M0 5.500L6 0v3.500h6v4H6V11z" fill="#e0e0e0" /></svg>
                    <span className="ml-[11px]"><Magnifier s={13} c="#c8c8c8" sw={1.5} /></span>
                  </div>
                </div>
              </div>
            </div>
            <div className="bg-[#3e3e3e]">
              <DetailHead t="Actor Tick" />
              {tick.map((r) => <DetailRow key={r.n} r={r} />)}
              <MoreBar />
            </div>
            <div className="bg-[#3e3e3e]">
              <DetailHead t="Replication" />
              {replication.map((r) => <DetailRow key={r.n} r={r} />)}
              <MoreBar />
            </div>
          </div>
          <div className="absolute inset-y-0 right-[3px] flex w-[11px] flex-col items-center pt-px">
            <div className="h-[730px] w-full shrink-0 rounded-[1px] border border-[#2c2c2c] bg-[#cfcfcf]" />
            <div className="w-px grow bg-[#777]" />
          </div>
        </div>
      </div>
    </div>
  );
}

/* ---------- window chrome ---------- */

function TitleBar() {
  return (
    <div className="relative flex h-[26px] shrink-0 border-b border-black bg-linear-to-b from-[#4b4b4b] to-[#252525]">
      <svg width="24" height="20" viewBox="0 0 24 20" className="ml-0.5 mt-[3px]">
        <path d="M0 6.500Q3 2 8.500.5 7 2.500 7 5v7.500q0 2.500 1.800 2.500 1.700-.2 3.200-1.800V4.500Q12 3 10.500 3.500 13 1 19.500 0 17.500 2 17.500 4v8.500q0 2.500 1.500 2.500 1-.1 2.500-1.500-1 3.500-5.500 5.500L12.300 17Q10 19.500 7 19 2.500 18.500 2.500 14V7Q2.500 5 0 6.500z" fill="#fff" />
      </svg>
      <div className="ml-2.5 flex">
        <svg width="210" height="25" viewBox="0 0 210 25" className="absolute left-9 top-0">
          <defs><linearGradient id="tb" x1="0" y1="0" x2="0" y2="1"><stop offset="0" stopColor="#979797" /><stop offset="1" stopColor="#6c6c6c" /></linearGradient></defs>
          <path d="M0 25Q6 24 8 17L12 6Q14 1 19 1H190Q195 1 197 6L203 20Q205 25 210 25z" fill="url(#tb)" />
        </svg>
        <div className="relative ml-[17px] flex w-[172px] items-center pb-px">
          <BookIcon />
          <span className="ml-1.5 w-[141px] overflow-hidden whitespace-nowrap text-[12px] text-[#ececec] [text-shadow:1px_1px_0_#222]">PlayfieldSimulation_inProgress</span>
          <span className="ml-[5px]"><CloseX c="#505050" /></span>
        </div>
      </div>
      <div className="ml-auto flex">
        <svg width="15" height="15" viewBox="0 0 15 15" className="mr-px mt-1"><path d="M1 1l13 1v9.500l-4 .3v3L6.500 11.500 1 11z" fill="#a3cbe6" /></svg>
        <svg width="17" height="16" viewBox="0 0 17 16" className="ml-[9px] mt-1">
          <path d="M4 7v6l7 2 3-3V6z" fill="#5f7ea4" /><path d="M0 4.500L8 1l8 3-6 6z" fill="#b8d0ec" /><path d="M1.500 5v8" stroke="#d2a24c" strokeWidth="1.800" />
        </svg>
        <div className="ml-3 mr-0.5 flex h-4 gap-px">
          <span className="flex w-[25px] justify-center rounded-bl-[3px] border border-t-0 border-[#777] bg-linear-to-b from-[#4e4e4e] to-[#1b1b1b]"><span className="mt-[8px] h-[3px] w-[11px] bg-white" /></span>
          <span className="flex w-[23px] items-center justify-center border border-t-0 border-[#777] bg-linear-to-b from-[#4e4e4e] to-[#1b1b1b]">
            <svg width="11" height="11" viewBox="0 0 11 11" fill="none" stroke="#fff" strokeWidth="1.600"><path d="M3.500 3V1h6.500v6.500H8" /><rect x="1" y="3.500" width="6.500" height="6.500" /><path d="M3.500 6.500h1.500" /></svg>
          </span>
          <span className="flex w-[41px] items-center justify-center rounded-br-[3px] border border-t-0 border-[#777] bg-linear-to-b from-[#4e4e4e] to-[#1b1b1b] pr-0.5">
            <svg width="11" height="10" viewBox="0 0 11 10"><path d="M1.200.8l8.600 8.400M9.800.8L1.200 9.200" stroke="#fff" strokeWidth="2.600" /></svg>
          </span>
        </div>
      </div>
    </div>
  );
}

export default function App() {
  return (
    <div className="flex h-[1037px] w-[1920px] flex-col overflow-hidden bg-[#212121] font-['Roboto',sans-serif]">
      <TitleBar />
      <div className="flex h-[19px] shrink-0 items-center border-b border-black bg-linear-to-b from-[#292929] to-[#141414] pl-2.5 text-[12px] tracking-[0.05px] text-[#dcdcdc]">
        <span className="w-[39px]">File</span>
        <span className="w-[41px]">Edit</span>
        <span className="w-[46px]">View</span>
        <span className="w-[55px]">Debug</span>
        <span className="w-[63px]">Window</span>
        <span>Help</span>
        <div className="ml-auto mr-0.5 flex h-[19px] w-[224px] items-center justify-between rounded-[2px] bg-[#cbcbcb] pl-[5px]">
          <span className="text-[12px] tracking-[0.1px] text-[#8d8d8d]">Search For Help</span>
          <Magnifier />
        </div>
      </div>
      <div className="flex min-h-0 grow pl-px pt-px">
        <LeftPanel />
        <div className="ml-[5px] flex w-[1195px] shrink-0 flex-col">
          <Toolbar />
          <div className="ml-1 mt-[5px] flex h-[21px] w-[150px] shrink-0 items-center rounded-t-[2px] border-t border-[#b99c1e] bg-[#5f5f5f] pl-[5px] pr-[9px]">
            <GraphIcon />
            <span className="ml-[5px] pb-0.5 text-[12px] tracking-[0.15px] text-[#e0e0e0] [text-shadow:1px_1px_0_#222]">Event Graph</span>
            <span className="ml-auto"><CloseX /></span>
          </div>
          <Canvas />
          <Results />
        </div>
        <Details />
      </div>
    </div>
  );
}
